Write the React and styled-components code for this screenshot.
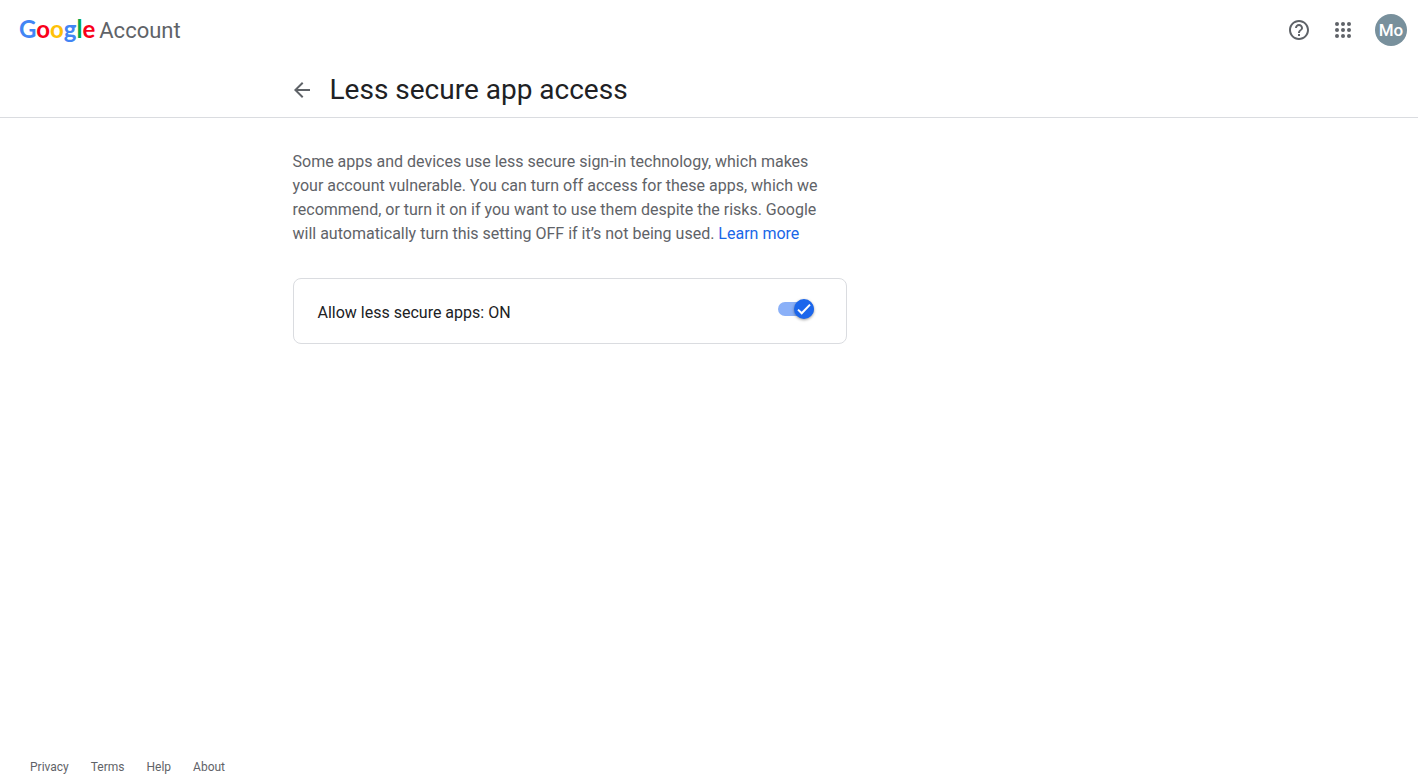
import React, { useState } from "react";
import styled, { createGlobalStyle } from "styled-components";

const GlobalStyle = createGlobalStyle`
  * { box-sizing: border-box; }
  body {
    margin: 0;
    background: #fff;
    color: #202124;
    font-family: Roboto, "Liberation Sans", sans-serif;
    font-size: 16px;
    line-height: 24px;
    -webkit-font-smoothing: antialiased;
  }
`;

const Page = styled.div`
  display: flex;
  flex-direction: column;
  min-height: 100vh;
`;

const TopBar = styled.header`
  display: flex;
  align-items: center;
  justify-content: space-between;
  height: 60px;
  padding: 0 11px 0 19px;
`;

const Brand = styled.a`
  display: flex;
  align-items: baseline;
  gap: 4px;
  color: #5f6368;
  font-size: 22px;
  line-height: 28px;
  text-decoration: none;
`;

const Wordmark = styled.span`
  font-family: Lato, sans-serif;
  font-size: 24px;
  font-weight: 700;
`;

const Letter = styled.span`
  color: ${(p) => p.$color};
`;

const Actions = styled.div`
  display: flex;
  align-items: center;
  gap: 20px;
`;

const IconButton = styled.button`
  display: flex;
  padding: 0;
  border: 0;
  background: none;
  color: #5f6368;
  cursor: pointer;

  svg { fill: currentColor; }
`;

const Avatar = styled.button`
  width: 32px;
  height: 32px;
  padding: 0;
  border: 0;
  border-radius: 50%;
  background: #78909c;
  color: #fff;
  font: 500 17px/32px Roboto, sans-serif;
  cursor: pointer;
`;

const TitleBar = styled.div`
  padding: 0 24px;
  border-bottom: 1px solid #dadce0;
`;

const Column = styled.div`
  width: 100%;
  max-width: 833px;
  margin: 0 auto;
`;

const TitleRow = styled(Column)`
  display: flex;
  align-items: center;
  gap: 17px;
  padding: 12px 0 9px;
`;

const Title = styled.h1`
  margin: 0;
  font-size: 28px;
  font-weight: 400;
  line-height: 36px;
`;

const Main = styled.main`
  flex: 1;
  padding: 32px 24px;
`;

const Content = styled.div`
  max-width: 554px;
`;

const Intro = styled.p`
  margin: 0 0 32px;
  padding-right: 16px;
  color: #5f6368;
`;

const TextLink = styled.a`
  color: #1967e8;
  text-decoration: none;
`;

const SettingCard = styled.label`
  display: flex;
  align-items: flex-start;
  justify-content: space-between;
  padding: 20px 32px 18px 24px;
  border: 1px solid #dadce0;
  border-radius: 8px;
  cursor: pointer;
`;

const SettingText = styled.span`
  padding-top: 2px;
`;

const Switch = styled.span`
  display: grid;
  width: 36px;
  height: 20px;
  align-items: center;

  > * { grid-area: 1 / 1; }
`;

const SwitchInput = styled.input`
  appearance: none;
  width: 36px;
  height: 14px;
  margin: 0;
  border-radius: 7px;
  background: #bdc1c6;
  cursor: pointer;

  &:checked { background: #8ab0f8; }
  &:focus-visible { outline: 2px solid #1967d2; outline-offset: 4px; }
`;

const Knob = styled.span`
  display: grid;
  place-items: center;
  justify-self: ${(p) => (p.$on ? "end" : "start")};
  width: 20px;
  height: 20px;
  border-radius: 50%;
  background: ${(p) => (p.$on ? "#1b66ec" : "#fff")};
  box-shadow: 0 1px 3px rgba(0, 0, 0, 0.4);
  pointer-events: none;
`;

const Footer = styled.footer`
  display: flex;
  gap: 22px;
  padding: 0 30px 9px;
`;

const FooterLink = styled.a`
  color: #5f6368;
  font-size: 12px;
  line-height: 16px;
  text-decoration: none;
`;

const googleLetters = [
  ["G", "#4285f4"],
  ["o", "#f90019"],
  ["o", "#ffc107"],
  ["g", "#4285f4"],
  ["l", "#00a94b"],
  ["e", "#f90019"],
];

const footerLinks = ["Privacy", "Terms", "Help", "About"];

export default function App() {
  const [allowed, setAllowed] = useState(true);

  return (
    <Page>
      <GlobalStyle />
      <TopBar>
        <Brand href="#home">
          <Wordmark>
            {googleLetters.map(([letter, color], i) => (
              <Letter key={i} $color={color}>{letter}</Letter>
            ))}
          </Wordmark>
          <span>Account</span>
        </Brand>
        <Actions>
          <IconButton type="button" aria-label="Help">
            <svg width="24" height="24" viewBox="0 0 24 24">
              <path d="M11 18h2v-2h-2v2zm1-16C6.48 2 2 6.48 2 12s4.48 10 10 10 10-4.48 10-10S17.52 2 12 2zm0 18c-4.41 0-8-3.59-8-8s3.59-8 8-8 8 3.59 8 8-3.59 8-8 8zm0-14c-2.21 0-4 1.79-4 4h2c0-1.1.9-2 2-2s2 .9 2 2c0 2-3 1.75-3 5h2c0-2.25 3-2.5 3-5 0-2.21-1.79-4-4-4z" />
            </svg>
          </IconButton>
          <IconButton type="button" aria-label="Google apps">
            <svg width="24" height="24" viewBox="0 0 24 24">
              {[6, 12, 18].map((y) =>
                [6, 12, 18].map((x) => <circle key={`${x}-${y}`} cx={x} cy={y} r="2" />)
              )}
            </svg>
          </IconButton>
          <Avatar type="button" aria-label="Account: Mo">Mo</Avatar>
        </Actions>
      </TopBar>

      <TitleBar>
        <TitleRow>
          <IconButton type="button" aria-label="Back">
            <svg width="20" height="20" viewBox="3 2 20 20">
              <path d="M20 11H7.83l5.59-5.59L12 4l-8 8 8 8 1.41-1.41L7.83 13H20v-2z" />
            </svg>
          </IconButton>
          <Title>Less secure app access</Title>
        </TitleRow>
      </TitleBar>

      <Main>
        <Column>
          <Content>
            <Intro>
              Some apps and devices use less secure sign-in technology, which makes your
              account vulnerable. You can turn off access for these apps, which we
              recommend, or turn it on if you want to use them despite the risks. Google
              will automatically turn this setting OFF if it’s not being used.{" "}
              <TextLink href="#learn-more">Learn more</TextLink>
            </Intro>
            <SettingCard>
              <SettingText>Allow less secure apps: {allowed ? "ON" : "OFF"}</SettingText>
              <Switch>
                <SwitchInput
                  type="checkbox"
                  role="switch"
                  checked={allowed}
                  onChange={(e) => setAllowed(e.target.checked)}
                />
                <Knob $on={allowed}>
                  {allowed && (
                    <svg width="16" height="16" viewBox="0 0 16 16" fill="none" stroke="#fff" strokeWidth="2">
                      <path d="M2 8.6l3.7 3.7L14 3.6" />
                    </svg>
                  )}
                </Knob>
              </Switch>
            </SettingCard>
          </Content>
        </Column>
      </Main>

      <Footer>
        {footerLinks.map((name) => (
          <FooterLink key={name} href={`#${name.toLowerCase()}`}>{name}</FooterLink>
        ))}
      </Footer>
    </Page>
  );
}
